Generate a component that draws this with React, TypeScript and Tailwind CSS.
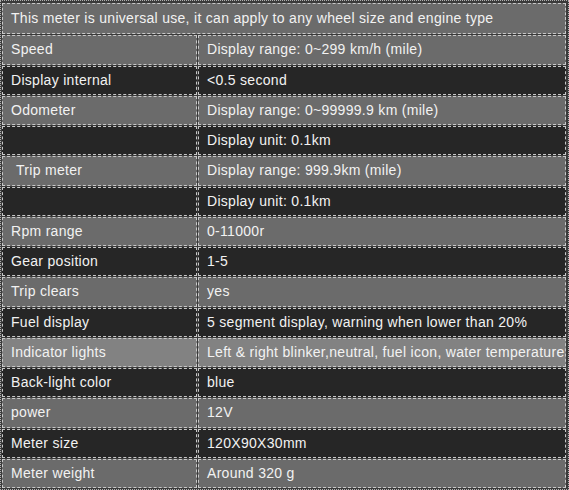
import React from "react";

type Row = { k: string; v: string; tone: "light" | "dark" | "lighter"; indent?: boolean };

const rows: Row[] = [
  { k: "Speed", v: "Display range: 0~299 km/h (mile)", tone: "light" },
  { k: "Display internal", v: "<0.5 second", tone: "dark" },
  { k: "Odometer", v: "Display range: 0~99999.9 km (mile)", tone: "light" },
  { k: "", v: "Display unit: 0.1km", tone: "dark" },
  { k: "Trip meter", v: "Display range: 999.9km (mile)", tone: "light", indent: true },
  { k: "", v: "Display unit: 0.1km", tone: "dark" },
  { k: "Rpm range", v: "0-11000r", tone: "light" },
  { k: "Gear position", v: "1-5", tone: "dark" },
  { k: "Trip clears", v: "yes", tone: "light" },
  { k: "Fuel display", v: "5 segment display, warning when lower than 20%", tone: "dark" },
  { k: "Indicator lights", v: "Left & right blinker,neutral, fuel icon, water temperature", tone: "lighter" },
  { k: "Back-light color", v: "blue", tone: "dark" },
  { k: "power", v: "12V", tone: "light" },
  { k: "Meter size", v: "120X90X30mm", tone: "dark" },
  { k: "Meter weight", v: "Around 320 g", tone: "light" },
];

function toneClass(t: Row["tone"]) {
  if (t === "dark") return "bg-[#262626]";
  if (t === "lighter") return "bg-[#828282]";
  return "bg-[#6b6b6b]";
}

export default function App() {
  return (
    <div
      className="w-[569px] h-[490px] bg-[#3a3a3a] border border-dotted border-[#b0b0b0] pt-[2px] pl-[1px] pr-[2px] pb-[1px] flex flex-col gap-[1px] text-[14px] tracking-[0.3px] text-[#f2f2f2]"
      style={{ fontFamily: '"Liberation Sans", Arial, sans-serif' }}
    >
      <div className="flex-1 flex items-center border border-dashed border-[#c8c8c8] bg-[#6b6b6b] pl-[8px] whitespace-nowrap">
        This meter is universal use, it can apply to any wheel size and engine type
      </div>
      {rows.map((r, i) => (
        <div key={i} className="flex-1 flex gap-[1px]">
          <div
            className={`w-[195px] shrink-0 flex items-center border border-dashed border-[#c8c8c8] ${toneClass(r.tone)} ${r.indent ? "pl-[13px]" : "pl-[8px]"} whitespace-nowrap`}
          >
            {r.k}
          </div>
          <div
            className={`flex-1 flex items-center border border-dashed border-[#c8c8c8] ${toneClass(r.tone)} pl-[8px] whitespace-nowrap overflow-hidden`}
          >
            {r.v}
          </div>
        </div>
      ))}
    </div>
  );
}
